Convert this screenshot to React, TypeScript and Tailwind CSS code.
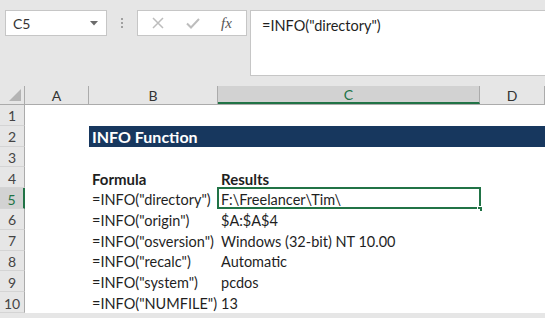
import React from 'react'

const font = { fontFamily: 'Lato, "Open Sans", sans-serif' }

const rows: { b?: string; c?: string; bold?: boolean; title?: boolean; selected?: boolean }[] = [
  {},
  { title: true },
  {},
  { b: 'Formula', c: 'Results', bold: true },
  { b: '=INFO("directory")', c: 'F:\\Freelancer\\Tim\\', selected: true },
  { b: '=INFO("origin")', c: '$A:$A$4' },
  { b: '=INFO("osversion")', c: 'Windows (32-bit) NT 10.00' },
  { b: '=INFO("recalc")', c: 'Automatic' },
  { b: '=INFO("system")', c: 'pcdos' },
  { b: '=INFO("NUMFILE")', c: '13' },
]

export default function App() {
  return (
    <div className="w-[545px] h-[318px] overflow-hidden bg-[#e6e6e6] text-[#1f1f1f]" style={font}>
      <FormulaBar />
      <ColumnHeaders />
      {rows.map((row, i) => (
        <div key={i} className="flex h-[20.8px]">
          <div
            className={`w-[25px] shrink-0 flex items-center justify-center pt-[2px] text-[14px] border-b border-[#d4d4d4] ${
              row.selected ? 'bg-[#d2d2d2] text-[#217346] border-r-2 border-r-[#217346]' : 'bg-[#e6e6e6] text-[#444] border-r border-r-[#ababab]'
            }`}
          >
            {i + 1}
          </div>
          <div className="w-[64px] shrink-0 bg-white" />
          {row.title ? (
            <div className="flex-1 bg-[#17375e] flex items-center pl-[3px] pt-[1px] text-white font-bold text-[16px]">INFO Function</div>
          ) : (
            <>
              <div
                className={`w-[129px] shrink-0 bg-white flex items-end pl-[3px] leading-[18px] whitespace-nowrap ${
                  row.bold ? 'font-bold text-[15px]' : 'text-[14.5px]'
                }`}
              >
                {row.b}
              </div>
              <div
                className={`w-[262px] shrink-0 bg-white flex items-end pl-[3px] leading-[18px] whitespace-nowrap relative ${
                  row.bold ? 'font-bold text-[15px]' : 'text-[14.5px]'
                }`}
              >
                {row.c}
                {row.selected && (
                  <>
                    <div className="absolute -left-[1px] -top-[1px] -right-[1px] bottom-0 border-2 border-[#217346]" />
                    <div className="absolute -right-[3px] -bottom-[3px] w-[6px] h-[6px] bg-[#217346] border border-white" />
                  </>
                )}
              </div>
              <div className="flex-1 bg-white" />
            </>
          )}
        </div>
      ))}
    </div>
  )
}

function FormulaBar() {
  return (
    <div className="h-[86px] flex items-start pt-[10px] pl-[5px]">
      <div className="w-[102px] h-[26px] bg-white border border-[#c6c6c6] flex items-center justify-between pl-[7px] pr-[8px] text-[14px] text-[#333]">
        <span>C5</span>
        <svg width="8" height="5" viewBox="0 0 8 5">
          <path d="M0 0 L8 0 L4 4.5 Z" fill="#6b6b6b" />
        </svg>
      </div>
      <div className="w-[30px] h-[26px] flex flex-col items-center justify-center gap-[2px]">
        <span className="w-[2px] h-[2px] bg-[#a0a0a0]" />
        <span className="w-[2px] h-[2px] bg-[#a0a0a0]" />
        <span className="w-[2px] h-[2px] bg-[#a0a0a0]" />
      </div>
      <div className="w-[110px] h-[26px] bg-white border border-[#c6c6c6] flex items-center">
        <svg className="ml-[14px]" width="12" height="12" viewBox="0 0 12 12">
          <path d="M1 1 L11 11 M11 1 L1 11" stroke="#bdbdbd" strokeWidth="1.5" />
        </svg>
        <svg className="ml-[22px]" width="14" height="11" viewBox="0 0 14 11">
          <path d="M1 5.5 L5 9.5 L13 1" stroke="#bdbdbd" strokeWidth="2" fill="none" />
        </svg>
        <span className="ml-[21px] text-[15px] italic text-[#555]" style={{ fontFamily: '"Liberation Serif", serif' }}>
          fx
        </span>
      </div>
      <div className="ml-[3px] flex-1 h-[66px] bg-white border border-[#c6c6c6] border-r-0 pl-[11px] pt-[4px] text-[14.5px]">
        =INFO("directory")
      </div>
    </div>
  )
}

function ColumnHeaders() {
  const cols = [
    { label: 'A', w: 'w-[64px]' },
    { label: 'B', w: 'w-[129px]' },
    { label: 'C', w: 'w-[262px]', sel: true },
    { label: 'D', w: 'flex-1' },
  ]
  return (
    <div className="flex h-[19px] border-b border-[#ababab]">
      <div className="w-[25px] shrink-0 relative border-r border-[#ababab]">
        <svg className="absolute right-[3px] bottom-[3px]" width="12" height="12" viewBox="0 0 12 12">
          <path d="M12 0 L12 12 L0 12 Z" fill="#b4b4b4" />
        </svg>
      </div>
      {cols.map((c) => (
        <div
          key={c.label}
          className={`${c.w} shrink-0 flex items-center justify-center text-[14px] border-r border-[#ababab] ${
            c.sel ? 'bg-[#d2d2d2] text-[#217346] border-b-2 border-b-[#217346]' : 'text-[#333]'
          }`}
        >
          {c.label}
        </div>
      ))}
    </div>
  )
}
